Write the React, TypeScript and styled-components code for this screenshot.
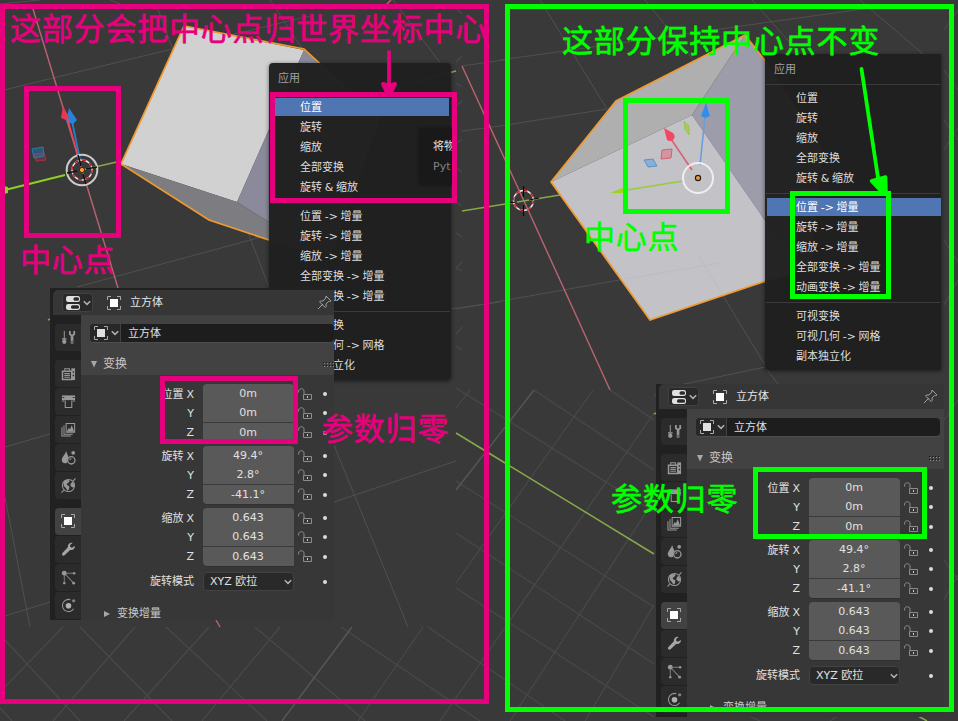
import React from "react";
import styled, { createGlobalStyle } from "styled-components";

const PINK = "#e6007e";
const GREEN = "#00ff00";

const GlobalStyle = createGlobalStyle`
  html, body { margin: 0; padding: 0; background: #393939; }
  * { box-sizing: border-box; }
`;

const Canvas = styled.main`
  position: relative;
  width: 958px;
  height: 721px;
  overflow: hidden;
  background: #393939;
  color: #e0e0e0;
  font: 11px/20px "DejaVu Sans", "Noto Sans CJK SC", sans-serif;
  white-space: nowrap;
`;

const Viewport = styled.svg`
  position: absolute;
  inset: 0;
  width: 958px;
  height: 721px;
`;

/* ---------- menus ---------- */

const MenuWindow = styled.div<{ $x: number; $y: number; $w: number; $square?: boolean }>`
  position: absolute;
  left: ${(p) => p.$x}px;
  top: ${(p) => p.$y}px;
  width: ${(p) => p.$w}px;
  display: flex;
  flex-direction: column;
  padding: 5px 0 ${(p) => (p.$square ? 4 : 5)}px;
  border-radius: ${(p) => (p.$square ? "0 0 0 3px" : "4px")};
  background: rgba(32, 32, 32, 0.975);
  box-shadow: 0 1px 4px rgba(0, 0, 0, 0.55);
`;

const MenuTitle = styled.div`
  height: 20px;
  padding-left: 9px;
  line-height: 21px;
  color: #a0a0a0;
`;

const MenuSeparator = styled.div`
  height: 9px;
  padding: 5px 1px 3px;
  &::before {
    content: "";
    display: block;
    height: 1px;
    background: #3b3b3b;
  }
`;

const MenuItem = styled.div<{ $active?: boolean; $inset: number }>`
  height: 18px;
  margin: 1px ${(p) => p.$inset}px 1px 2px;
  padding-left: 29px;
  line-height: 20px;
  word-spacing: -0.8px;
  background: ${(p) => (p.$active ? "#4f76b3" : "transparent")};
  color: ${(p) => (p.$active ? "#ffffff" : "#dedede")};
`;

const groups = [
  ["位置", "旋转", "缩放", "全部变换", "旋转 & 缩放"],
  ["位置 -> 增量", "旋转 -> 增量", "缩放 -> 增量", "全部变换 -> 增量", "动画变换 -> 增量"],
  ["可视变换", "可视几何 -> 网格", "副本独立化"],
];

interface MenuProps {
  x: number;
  y: number;
  w: number;
  active: string;
  square?: boolean;
}

const ApplyMenu = ({ x, y, w, active, square }: MenuProps) => (
  <MenuWindow $x={x} $y={y} $w={w} $square={square}>
    <MenuTitle>应用</MenuTitle>
    {groups.map((g, i) => (
      <React.Fragment key={i}>
        <MenuSeparator />
        {g.map((t) => (
          <MenuItem key={t} $active={t === active} $inset={square ? 0 : 2}>
            {t}
          </MenuItem>
        ))}
      </React.Fragment>
    ))}
  </MenuWindow>
);

const Tooltip = styled.div`
  position: absolute;
  left: 419px;
  top: 128px;
  width: 34px;
  height: 57px;
  padding: 9px 0 0 14px;
  overflow: hidden;
  border-radius: 4px 0 0 4px;
  background: #191919;
  box-shadow: 0 0 3px #151515;
`;

const TooltipHint = styled.div`
  color: #838383;
`;

/* ---------- properties editor ---------- */

const Editor = styled.section<{ $x: number; $y: number; $w: number; $h: number; $top: number }>`
  position: absolute;
  left: ${(p) => p.$x}px;
  top: ${(p) => p.$y}px;
  width: ${(p) => p.$w}px;
  height: ${(p) => p.$h}px;
  padding-top: ${(p) => p.$top}px;
  display: flex;
  flex-direction: column;
  overflow: hidden;
  background: #212121;
`;

const EditorHeader = styled.header`
  display: flex;
  align-items: center;
  flex: none;
  height: 25px;
  margin-left: 3px;
  padding: 0 2px 0 9px;
  border-radius: 5px 0 0 0;
  background: #363636;
`;

const ModeButton = styled.div`
  display: flex;
  align-items: center;
  gap: 3px;
  width: 31px;
  height: 19px;
  padding-left: 3px;
  margin-right: 14px;
  border: 1px solid #414141;
  border-radius: 3px;
  background: #292929;
`;

const HeaderName = styled.span`
  flex: 1;
  padding-left: 9px;
  color: #e6e6e6;
`;

const PinSlot = styled.div<{ $gap: number }>`
  display: flex;
  margin-right: ${(p) => p.$gap}px;
`;

const EditorBody = styled.div`
  display: flex;
  flex: 1;
  min-height: 0;
`;

const TabStrip = styled.nav`
  display: flex;
  flex-direction: column;
  flex: none;
  gap: 1px;
  width: 31px;
  padding: 9px 0 0 5px;
`;

const Tab = styled.div<{ $active?: boolean; $gap?: boolean }>`
  display: flex;
  flex: none;
  align-items: center;
  justify-content: center;
  height: 27px;
  padding-bottom: 1px;
  margin-top: ${(p) => (p.$gap ? 8 : 0)}px;
  border-radius: 4px 0 0 4px;
  background: ${(p) => (p.$active ? "#424242" : "#2b2b2b")};
`;

const Content = styled.div`
  flex: 1;
  min-width: 0;
  background: #373737;
`;

const ContentTop = styled.div`
  height: 60px;
  padding: 9px 0 0 9px;
  background: #424242;
`;

const NameRow = styled.div`
  display: flex;
  width: 244px;
  height: 18px;
  border-radius: 4px;
  overflow: hidden;
  background: #1d1d1d;
  box-shadow: 0 1px 0 #4d4d4d;
`;

const NameType = styled.div`
  display: flex;
  align-items: center;
  gap: 3px;
  width: 31px;
  padding: 0 0 1px 4px;
  border-right: 1px solid #424242;
  background: #282828;
`;

const NameInput = styled.div`
  padding-left: 7px;
  line-height: 19px;
`;

const SectionHead = styled.div<{ $w: number }>`
  display: flex;
  align-items: center;
  width: ${(p) => p.$w}px;
  height: 22px;
  margin-top: 11px;
  padding-left: 1px;
  font-size: 12px;
  color: #c9c9c9;
`;

const SectionLabel = styled.span`
  flex: 1;
  padding-left: 6px;
`;

const Fields = styled.div`
  display: flex;
  flex-direction: column;
  gap: 4px;
  padding-top: 9px;
`;

const FieldGroup = styled.div`
  display: grid;
  grid-template-rows: 19px 20px 19px;
`;

const FieldRow = styled.div`
  display: grid;
  grid-template-columns: 113px 91px 18px 1fr;
  column-gap: 9px;
  align-items: center;
`;

const FieldLabel = styled.label`
  text-align: right;
  line-height: 19px;
  word-spacing: -0.5px;
`;

const NumberField = styled.div<{ $pos: number }>`
  align-self: stretch;
  padding-right: 1px;
  border-bottom: ${(p) => (p.$pos < 2 ? "1px solid #3a3a3a" : "0")};
  border-radius: ${(p) => (p.$pos === 0 ? "4px 4px 0 0" : p.$pos === 2 ? "0 0 0 4px" : "0")};
  background: #595959;
  text-align: center;
  line-height: 19px;
  box-shadow: ${(p) => (p.$pos === 2 ? "0 1px 0 #303030" : "none")};
`;

const LockSlot = styled.div`
  display: flex;
  margin-left: -5px;
`;

const Dot = styled.i`
  width: 4px;
  height: 4px;
  margin-left: -7px;
  border-radius: 50%;
  background: #dcdcdc;
`;

const ModeRow = styled(FieldRow)`
  height: 19px;
  margin-top: 2px;
`;

const Select = styled.div`
  display: flex;
  align-items: center;
  justify-content: space-between;
  height: 19px;
  padding: 0 1px 0 6px;
  border: 1px solid #424242;
  border-radius: 4px;
  background: #292929;
`;

const SubSection = styled.div`
  display: flex;
  align-items: center;
  gap: 7px;
  height: 20px;
  margin-top: 9px;
  padding-left: 23px;
  color: #c9c9c9;
`;

const Icon = ({ children }: { children: React.ReactNode }) => (
  <svg width="15" height="15" viewBox="0 0 16 16" fill="none" stroke="#989898" strokeWidth="1.1">
    {children}
  </svg>
);

const Chevron = () => (
  <svg width="8" height="6" viewBox="0 0 8 6" fill="none" stroke="#b0b0b0" strokeWidth="1.5">
    <path d="M.8 1.200l3.200 3.200 3.200-3.200" />
  </svg>
);

const ObjectIcon = ({ bright }: { bright?: boolean }) => (
  <svg width="14" height="14" viewBox="0 0 14 14" fill="none" stroke="#a8a8a8">
    <path d="M.5 4V.5H4M10 .5h3.5V4M13.5 10v3.5H10M4 13.5H.5V10" />
    <rect x="3" y="3" width="8" height="8" fill={bright ? "#fff" : "#e0e0e0"} stroke="none" />
  </svg>
);

const PropertiesIcon = () => (
  <svg width="14" height="14" viewBox="0 0 14 14">
    <rect width="14" height="6" rx="2.2" fill="#e0e0e0" />
    <rect x="7.500" y="1.200" width="5.500" height="3.600" rx="1.600" fill="#2a2a2a" />
    <rect y="8" width="14" height="6" rx="2.2" fill="#e0e0e0" />
    <rect x="5" y="9.200" width="8" height="3.600" rx="1.600" fill="#2a2a2a" />
  </svg>
);

const PinIcon = () => (
  <svg width="15" height="15" viewBox="0 0 15 15" fill="none" stroke="#a0a0a0" strokeWidth="1">
    <path d="M1 14l5-5M9 1l5 5-1.5.6-1-.2L9 9l.2 2.5-1 1L2.5 7l1-1L6 6l2.8-3z" />
  </svg>
);

const LockIcon = () => (
  <svg width="15" height="13" viewBox="0 0 15 13" fill="none" stroke="#8c8c8c" strokeWidth="1">
    <path d="M.6 4.500V3C.6 0 6 0 6 3v3M5.500 6.500h8v5h-8z" />
    <path d="M9.5 8v2" stroke="#ccc" />
  </svg>
);

const Grip = () => (
  <svg width="11" height="5" viewBox="0 0 11 5" fill="#161616">
    {[0, 3, 6, 9].map((x) => (
      <g key={x}>
        <rect x={x} width="1" height="1" />
        <rect x={x} y="3" width="1" height="1" />
        <rect x={x + 1} y="1" width="1" height="1" fill="#8a8a8a" />
        <rect x={x + 1} y="4" width="1" height="1" fill="#8a8a8a" />
      </g>
    ))}
  </svg>
);

const Triangle = ({ open }: { open?: boolean }) => (
  <svg width="6" height="7" viewBox="0 0 6 7" fill="#a8a8a8">
    <path d={open ? "M0 0h6L3 6.5z" : "M0 0v6L6 3z"} />
  </svg>
);

const tabIcons: { gap?: boolean; active?: boolean; icon: React.ReactNode }[] = [
  {
    icon: (
      <Icon>
        <path d="M3.5 1v8" />
        <path d="M1 9.5h5M3.5 10v4" strokeWidth="1.5" />
        <circle cx="3.5" cy="12.5" r="2.3" fill="#989898" stroke="none" />
        <path d="M9.500 1v3.500l2.300 1.500 2.300-1.500V1" strokeWidth="1.9" />
        <path d="M11.800 6v8.500" strokeWidth="2.8" />
        <path d="M11.800 11.500v2" stroke="#333" />
      </Icon>
    ),
  },
  {
    gap: true,
    icon: (
      <Icon>
        <path d="M1.6 5.5h9.8v8.8H1.6z" strokeWidth="1.6" />
        <path d="M4 5V3h5v2M3.5 8h6M3.5 10h6M3.5 12h6" />
        <path d="M11 2.500h4v12.500h-4z" fill="#989898" stroke="none" />
        <path d="M12.500 6.500h1.500M12.500 10h1.500" stroke="#2b2b2b" strokeWidth="1.6" />
      </Icon>
    ),
  },
  {
    icon: (
      <Icon>
        <path d="M1 1.500h14v5H1z" fill="#989898" stroke="none" />
        <path d="M1 7.5h2.5M12.500 7.5H15M4.5 7v7.500h7V7" />
        <path d="M1.500 3.800h2M12.500 3.800h2" stroke="#333" />
      </Icon>
    ),
  },
  {
    icon: (
      <Icon>
        <path d="M5.500 1.500h9V11h-9zM3.200 3.500v9.500h9.300M1 5.500V15h9.500" />
        <path d="M6 10.5L8.500 6l1 2 2-4.500 2.500 7z" fill="#989898" stroke="none" />
      </Icon>
    ),
  },
  {
    icon: (
      <Icon>
        <path d="M5.500 1C4.500 5 .800 7.500.800 11c0 4 5.700 4 6 1.500C6.500 9 8.500 8 7.500 6 6.500 4 6 3 5.500 1z" fill="#989898" stroke="none" />
        <circle cx="13" cy="3" r="2" fill="#989898" stroke="none" />
        <circle cx="11" cy="11" r="3.900" fill="#2b2b2b" strokeWidth="1.4" />
        <path d="M9.200 10.500c.2-1 1-1.3 1.800-1.3" />
      </Icon>
    ),
  },
  {
    icon: (
      <Icon>
        <circle cx="8" cy="8" r="6.5" />
        <path
          d="M2.500 4l2-1.500 4-.5.500 2-3 2.500.500 1 2.500 1.500-.500 3-1.500 1.500-2-3L3 8.500z M10.500 5.500l2-1.500 1.500 3v2.500l-2 .500-2-2z"
          fill="#989898"
          stroke="none"
        />
        <path d="M15.500.5L13 3M.5 15.5L3 13" />
      </Icon>
    ),
  },
  { gap: true, active: true, icon: <ObjectIcon bright /> },
  {
    icon: (
      <Icon>
        <path
          d="M14.7 4.2l-3 2-2-1.2.2-2.2L12.4 1C9.5.2 7 2.5 7.3 5.6L1.3 12c-1 1.7 1 3.4 2.5 2.2l6-5.8c3 .6 5.5-1.6 4.9-4.2z"
          fill="#a5a5a5"
          stroke="none"
        />
      </Icon>
    ),
  },
  {
    icon: (
      <Icon>
        <path d="M6 3.5h7M3.5 6v8M5 5l8 8.500" stroke="#7c7c7c" />
        <g fill="#989898" stroke="none">
          <circle cx="3.5" cy="3.5" r="2.6" />
          <circle cx="14" cy="3.500" r="1.3" />
          <circle cx="3.5" cy="14" r="1.3" />
          <circle cx="13.500" cy="14" r="1.5" />
        </g>
      </Icon>
    ),
  },
  {
    icon: (
      <Icon>
        <path d="M10 1.800A6.500 6.500 0 1 0 13.500 11.500" />
        <circle cx="8" cy="8.2" r="3" fill="#b0b0b0" stroke="none" />
        <circle cx="13.500" cy="3" r="1.8" fill="#808080" stroke="none" />
      </Icon>
    ),
  },
];

const transforms = [
  { label: "位置", values: ["0m", "0m", "0m"] },
  { label: "旋转", values: ["49.4°", "2.8°", "-41.1°"] },
  { label: "缩放", values: ["0.643", "0.643", "0.643"] },
];
const axes = ["X", "Y", "Z"];

interface EditorProps {
  x: number;
  y: number;
  w: number;
  h: number;
  top: number;
}

const PropertiesEditor = ({ x, y, w, h, top }: EditorProps) => (
  <Editor $x={x} $y={y} $w={w} $h={h} $top={top}>
    <EditorHeader>
      <ModeButton>
        <PropertiesIcon />
        <Chevron />
      </ModeButton>
      <ObjectIcon bright />
      <HeaderName>立方体</HeaderName>
      <PinSlot $gap={w - 284}>
        <PinIcon />
      </PinSlot>
    </EditorHeader>
    <EditorBody>
      <TabStrip>
        {tabIcons.map((t, i) => (
          <Tab key={i} $active={t.active} $gap={t.gap}>
            {t.icon}
          </Tab>
        ))}
      </TabStrip>
      <Content>
        <ContentTop>
          <NameRow>
            <NameType>
              <ObjectIcon />
              <Chevron />
            </NameType>
            <NameInput>立方体</NameInput>
          </NameRow>
          <SectionHead $w={244}>
            <Triangle open />
            <SectionLabel>变换</SectionLabel>
            <Grip />
          </SectionHead>
        </ContentTop>
        <Fields>
          {transforms.map((g) => (
            <FieldGroup key={g.label}>
              {g.values.map((v, i) => (
                <FieldRow key={i}>
                  <FieldLabel>{i === 0 ? `${g.label} X` : axes[i]}</FieldLabel>
                  <NumberField $pos={i}>{v}</NumberField>
                  <LockSlot>
                    <LockIcon />
                  </LockSlot>
                  <Dot />
                </FieldRow>
              ))}
            </FieldGroup>
          ))}
          <ModeRow>
            <FieldLabel>旋转模式</FieldLabel>
            <Select>
              XYZ 欧拉
              <Chevron />
            </Select>
            <span />
            <Dot />
          </ModeRow>
          <SubSection>
            <Triangle />
            变换增量
          </SubSection>
        </Fields>
      </Content>
    </EditorBody>
  </Editor>
);

/* ---------- annotations ---------- */

const Frame = styled.div<{ $x: number; $y: number; $w: number; $h: number; $c: string }>`
  position: absolute;
  left: ${(p) => p.$x}px;
  top: ${(p) => p.$y}px;
  width: ${(p) => p.$w}px;
  height: ${(p) => p.$h}px;
  border: 5px solid ${(p) => p.$c};
`;

const Note = styled.div<{ $x: number; $y: number; $c: string }>`
  position: absolute;
  left: ${(p) => p.$x}px;
  top: ${(p) => p.$y}px;
  color: ${(p) => p.$c};
  font: 400 31px/36px "Noto Sans CJK SC", sans-serif;
  letter-spacing: 0.8px;
  -webkit-text-stroke: 0.6px ${(p) => p.$c};
`;

/* ---------- 3D scene ---------- */

type Seg = [number, number, number, number];

const gridLines: Seg[] = [
  [0, 91, 172, 49], [172, 49, 310, 16], [156, 4, 173, 50], [77, 287, 269, 235], [242, 217, 269, 287],
  [270, 0, 303, 50], [393, 0, 441, 64], [5, 447, 50, 434], [5, 497, 30, 627], [5, 616, 50, 602],
  [334, 445, 408, 627], [334, 502, 456, 461], [451, 309, 500, 302], [462, 66, 510, 59], [462, 131, 500, 126],
  [500, 60, 770, 22], [500, 126, 607, 109], [540, 0, 607, 109], [645, 0, 695, 62], [770, 22, 877, 7],
  [752, 0, 800, 54], [860, 0, 923, 54], [462, 308, 625, 279], [722, 294, 765, 365], [680, 385, 765, 367],
  [765, 367, 778, 384], [0, 4, 40, 0], [110, 0, 130, 8],
];

const floorLines: Seg[] = [
  [63, 627, 0, 692], [135, 627, 53, 721], [209, 627, 124, 721], [280, 627, 202, 721], [423, 627, 358, 721],
  [5, 640, 80, 721], [80, 627, 172, 721], [166, 627, 267, 721], [255, 627, 365, 721], [341, 627, 480, 721],
  [428, 627, 565, 721], [0, 708, 12, 721], [456, 388, 654, 512], [456, 481, 654, 607], [456, 533, 654, 664],
  [456, 588, 654, 717], [534, 390, 654, 470], [610, 390, 654, 420], [593, 390, 456, 583], [654, 413, 440, 721],
  [654, 500, 510, 721], [654, 605, 585, 721], [456, 408, 470, 390], [654, 397, 662, 384],
  [944, 30, 958, 10], [944, 70, 958, 90], [944, 120, 958, 140], [944, 150, 958, 128], [944, 240, 958, 262],
  [944, 305, 958, 280], [944, 420, 958, 400], [944, 600, 958, 575], [944, 560, 958, 580], [740, 712, 760, 721],
  [830, 721, 845, 711],
  [456, 8, 462, 14], [456, 62, 462, 56], [456, 83, 462, 87], [456, 106, 462, 101], [456, 144, 462, 139],
  [456, 168, 462, 172], [456, 202, 462, 206], [456, 233, 462, 237], [456, 268, 462, 262], [456, 268, 462, 271],
  [456, 334, 462, 327], [456, 346, 462, 350], [456, 309, 462, 308],
];

const strongLines: Seg[] = [
  [352, 627, 282, 721], [534, 390, 456, 490],
];

const Lines = ({ items, color, width = 1 }: { items: Seg[]; color: string; width?: number }) => (
  <g stroke={color} strokeWidth={width}>
    {items.map(([a, b, c, d], i) => (
      <line key={i} x1={a} y1={b} x2={c} y2={d} />
    ))}
  </g>
);

const Cursor = ({ x, y, r = 10 }: { x: number; y: number; r?: number }) => (
  <g fill="none" strokeWidth="1.4">
    <circle cx={x} cy={y} r={r} stroke="#e6e6e6" />
    <circle cx={x} cy={y} r={r} stroke="#d01822" strokeDasharray="3.9 3.9" />
  </g>
);

const Scene = () => (
  <Viewport viewBox="0 0 958 721">
    <Lines items={gridLines} color="#505050" />
    <Lines items={floorLines} color="#494949" width={1.2} />
    <Lines items={strongLines} color="#585858" width={1.3} />
    <Lines
      items={[[33, 9, 118, 288], [216, 620, 220, 627], [386, 5, 391, 0], [462, 66, 524, 201], [524, 201, 610, 390]]}
      color="#bc6370"
      width={1.4}
    />
    <Lines
      items={[[82, 170, 121, 161], [393, 88, 456, 71], [462, 211, 560, 195], [456, 433, 654, 554], [918, 716, 927, 721], [48, 320, 50, 319], [654, 414, 656, 413]]}
      color="#86a848"
      width={1.5}
    />

    <polygon points="184,26 304,50 237,202 121,164" fill="#d1d1d1" />
    <polygon points="304,50 379,118 330,255 269,240 269,222 237,202" fill="#8a8a9b" />
    <polygon points="121,164 237,202 269,222 300,250 269,240 209,220" fill="#7c7c81" />
    <polyline
      points="269,240 209,220 121,164 184,26 304,49 379,118 330,255 269,240"
      fill="none"
      stroke="#ef9a2f"
      strokeWidth="1.7"
    />

    <polygon points="551,182 616,101 745,35 692,115" fill="#afafb0" />
    <polygon points="745,35 767,64 822,150 810,268 766,222 692,115" fill="#9d9cab" />
    <polygon points="551,182 692,115 766,222 810,268 766,281 650,320" fill="#c3c2c7" />
    <path d="M625 279l95-16M697 254l25 40" stroke="#bcbcc0" fill="none" />
    <polyline
      points="766,281 650,320 551,182 616,101 745,35 766,62 822,150 810,268 766,281"
      fill="none"
      stroke="#ef9a2f"
      strokeWidth="1.7"
    />

    <path d="M5 190L65 175" stroke="#8ed020" strokeWidth="2" />
    <polygon points="4,186 8,187 8,193 4,194" fill="#8ed020" />
    <path d="M80 160L72 121" stroke="#2a7fc9" strokeWidth="1.8" />
    <polygon points="69,108 77,120 73,124 66,122" fill="#2583da" />
    <path d="M79 160L67 117" stroke="#f0405c" strokeWidth="1.6" />
    <polygon points="63,106 69,117 66,120 61,118" fill="#e63a50" />
    <path d="M34 154l10-1 2 7-10 1z" fill="#bd354b55" stroke="#a83345" />
    <path d="M32 149l11-2 1 9-10 2z" fill="#2775b077" stroke="#2b79b3" />
    <circle cx="82" cy="170" r="15.3" fill="none" stroke="#cccccc" strokeWidth="2" />
    <Cursor x={82} y={170} />
    <path d="M67 173l10-2M86 169l11-2M78 155l3 11M83 174l3 10" stroke="#111" strokeWidth="1.6" />
    <circle cx="82" cy="170" r="2.6" fill="#ff9c32" stroke="#3b2510" />

    <Cursor x={523.5} y={200.5} />
    <path d="M523.5 186v11M523.5 205v11M507 203l10-1M529 200l10-2" stroke="#080808" strokeWidth="1.2" />
    <path d="M700 165l5-48" stroke="#6b9ed7" strokeWidth="1.6" />
    <polygon points="706,103 710,116 705,118 701,116" fill="#348de9" />
    <path d="M692 170l-21-31" stroke="#d96074" strokeWidth="1.6" />
    <path d="M664 128l9 5a4 4 0 0 1-6 7z" fill="#f34763" />
    <path d="M683 181l-56 9" stroke="#9acb3a" strokeWidth="1.6" />
    <polygon points="610,193 625,187 628,190 627,193" fill="#9bd51e" />
    <path d="M684 121l5 5v9l-4-5z" fill="#a5cb5c" stroke="#98c53f" strokeWidth=".8" />
    <path d="M662 150l10-1-1 9-10 1z" fill="#d295a1" stroke="#d05a70" strokeWidth=".9" />
    <path d="M644 160l9-1 4 7-9 1z" fill="#8caed2" stroke="#4a8ed2" strokeWidth=".9" />
    <circle cx="698" cy="178" r="15" fill="none" stroke="#efeff0" strokeWidth="2" />
    <circle cx="698" cy="178" r="2.6" fill="#f39738" stroke="#24201c" strokeWidth="1.2" />
  </Viewport>
);

const Arrows = () => (
  <Viewport viewBox="0 0 958 721" strokeLinecap="round" strokeLinejoin="round">
    <path d="M389 52v36" stroke={PINK} strokeWidth="3.8" />
    <path d="M383 84l6 2 6-2-4 8h-4z" fill={PINK} stroke={PINK} strokeWidth="4" />
    <path d="M861.500 69l17 112" stroke={GREEN} strokeWidth="3.8" />
    <path d="M871.500 181l7-2 7-2 .5 14h-5z" fill={GREEN} stroke={GREEN} strokeWidth="3.500" />
  </Viewport>
);

export default function App() {
  return (
    <Canvas>
      <GlobalStyle />
      <Scene />
      <ApplyMenu x={269} y={63} w={182} active="位置" />
      <Tooltip>
        将物
        <TooltipHint>Pyt</TooltipHint>
      </Tooltip>
      <ApplyMenu x={765} y={54} w={176} active="位置 -> 增量" square />
      <PropertiesEditor x={50} y={288} w={284} h={332} top={2} />
      <PropertiesEditor x={656} y={384} w={288} h={333} top={0} />

      <Frame $x={0} $y={4} $w={489} $h={700} $c={PINK} />
      <Frame $x={24} $y={86} $w={97} $h={152} $c={PINK} />
      <Frame $x={270} $y={92} $w={187} $h={111} $c={PINK} />
      <Frame $x={160} $y={376} $w={138} $h={68} $c={PINK} />
      <Frame $x={505} $y={4} $w={449} $h={708} $c={GREEN} />
      <Frame $x={623} $y={98} $w={107} $h={116} $c={GREEN} />
      <Frame $x={790} $y={191} $w={101} $h={108} $c={GREEN} />
      <Frame $x={753} $y={467} $w={174} $h={72} $c={GREEN} />
      <Arrows />

      <Note $x={10} $y={9} $c={PINK}>这部分会把中心点归世界坐标中心</Note>
      <Note $x={20} $y={240} $c={PINK}>中心点</Note>
      <Note $x={322} $y={409} $c={PINK}>参数归零</Note>
      <Note $x={562} $y={21} $c={GREEN}>这部分保持中心点不变</Note>
      <Note $x={584} $y={217} $c={GREEN}>中心点</Note>
      <Note $x={611} $y={479} $c={GREEN}>参数归零</Note>
    </Canvas>
  );
}
